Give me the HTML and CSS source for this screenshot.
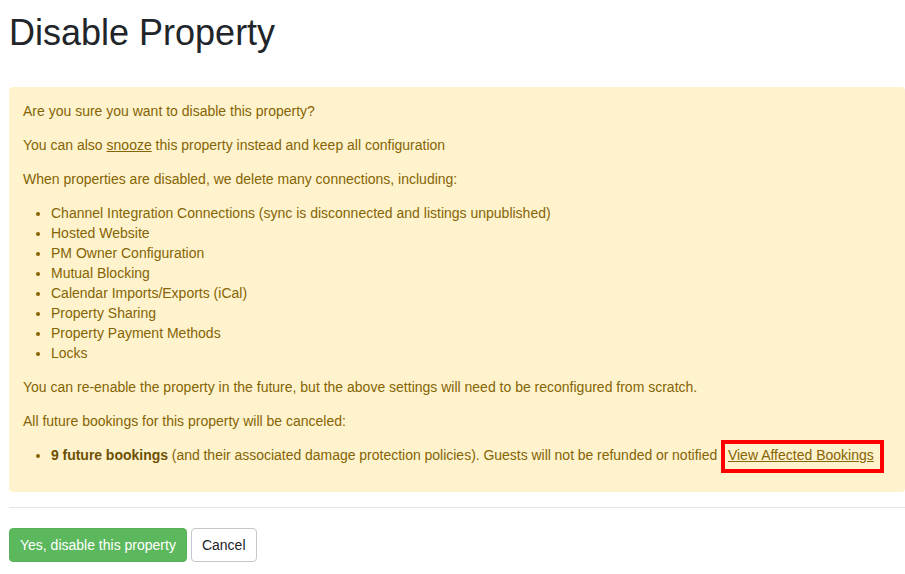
FILE: index.html
```html
<!DOCTYPE html>
<html lang="en">
<head>
<meta charset="utf-8">
<title>Disable Property</title>
<link rel="stylesheet" href="styles.css">
</head>
<body>
<div class="page">
  <h1 class="title">Disable Property</h1>
  <div class="alert">
    <p>Are you sure you want to disable this property?</p>
    <p>You can also <a class="alert-link" href="#">snooze</a> this property instead and keep all configuration</p>
    <p>When properties are disabled, we delete many connections, including:</p>
    <ul class="list">
      <li>Channel Integration Connections (sync is disconnected and listings unpublished)</li>
      <li>Hosted Website</li>
      <li>PM Owner Configuration</li>
      <li>Mutual Blocking</li>
      <li>Calendar Imports/Exports (iCal)</li>
      <li>Property Sharing</li>
      <li>Property Payment Methods</li>
      <li>Locks</li>
    </ul>
    <p>You can re-enable the property in the future, but the above settings will need to be reconfigured from scratch.</p>
    <p>All future bookings for this property will be canceled:</p>
    <ul class="list last">
      <li class="tight"><strong>9 future bookings</strong> (and their associated damage protection policies). Guests will not be refunded or notified <a class="alert-link highlight" href="#">View Affected Bookings</a></li>
    </ul>
  </div>
  <hr class="divider">
  <div class="actions">
    <button class="btn btn-success" type="button">Yes, disable this property</button>
    <button class="btn btn-default" type="button">Cancel</button>
  </div>
</div>
</body>
</html>
```
FILE: styles.css
```css
html, body {
  margin: 0;
  padding: 0;
  background: #ffffff;
}

body {
  font-family: "Liberation Sans", Arial, sans-serif;
  font-size: 14px;
  line-height: 20px;
  color: #212529;
}

.page {
  padding: 0 0 0 9px;
}

.title {
  margin: 13px 0 34px;
  font-size: 36px;
  line-height: 40px;
  font-weight: 400;
  color: #212529;
}

.alert {
  background: #fff3cd;
  color: #856404;
  border-radius: 4px;
  padding: 14px 14px 0 14px;
  margin: 0 0 15px;
  height: 391px;
  box-sizing: content-box;
}

.alert p {
  margin: 0 0 14px;
}

.list {
  margin: 0 0 14px;
  padding-left: 28px;
}

.list.last {
  margin-bottom: 0;
}

.tight {
  word-spacing: -0.2px;
}

.alert-link {
  color: #856404;
  text-decoration: underline;
}

.alert strong {
  font-weight: 700;
  color: #6d5003;
}

.highlight {
  word-spacing: normal;
  border: 4px solid #ff0000;
  padding: 3px 6px 6px 3px;
}

.divider {
  margin: 0 0 20px;
  border: 0;
  border-top: 1px solid #e5e5e5;
  height: 0;
}

.actions {
  display: flex;
  gap: 4px;
}

.btn {
  font-family: "Liberation Sans", Arial, sans-serif;
  font-size: 14px;
  line-height: 20px;
  padding: 6px 10px;
  border-radius: 4px;
  border: 1px solid transparent;
  cursor: pointer;
}

.btn-success {
  background: #5cb85c;
  border-color: #58b158;
  color: #ffffff;
}

.btn-default {
  background: #ffffff;
  border-color: #c4c7cc;
  color: #212529;
}
```
